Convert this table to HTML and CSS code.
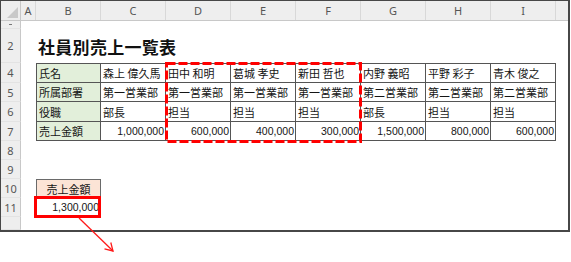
FILE: index.html
```html
<!DOCTYPE html>
<html lang="ja">
<head>
<meta charset="utf-8">
<title>社員別売上一覧表</title>
<link rel="stylesheet" href="styles.css">
</head>
<body>
<div class="page">
  <div class="frame">
    <div class="row hdr">
      <div class="corner"></div>
      <div class="ch">A</div>
      <div class="ch">B</div>
      <div class="ch">C</div>
      <div class="ch">D</div>
      <div class="ch">E</div>
      <div class="ch">F</div>
      <div class="ch">G</div>
      <div class="ch">H</div>
      <div class="ch">I</div>
      <div class="ch last"></div>
    </div>
    <div class="row r1"><div class="rh"><span class="cut"></span></div></div>
    <div class="row r2"><div class="rh">2</div><div></div><div class="title">社員別売上一覧表</div></div>
    <div class="row h20">
      <div class="rh">4</div><div></div>
      <div class="c lbl first top">氏名</div>
      <div class="c top">森上 偉久馬</div>
      <div class="c top">田中 和明</div>
      <div class="c top">葛城 孝史</div>
      <div class="c top">新田 哲也</div>
      <div class="c top">内野 義昭</div>
      <div class="c top">平野 彩子</div>
      <div class="c top">青木 俊之</div>
    </div>
    <div class="row h19">
      <div class="rh">5</div><div></div>
      <div class="c lbl first">所属部署</div>
      <div class="c">第一営業部</div>
      <div class="c">第一営業部</div>
      <div class="c">第一営業部</div>
      <div class="c">第一営業部</div>
      <div class="c">第二営業部</div>
      <div class="c">第二営業部</div>
      <div class="c">第二営業部</div>
    </div>
    <div class="row h20">
      <div class="rh">6</div><div></div>
      <div class="c lbl first">役職</div>
      <div class="c">部長</div>
      <div class="c">担当</div>
      <div class="c">担当</div>
      <div class="c">担当</div>
      <div class="c">部長</div>
      <div class="c">担当</div>
      <div class="c">担当</div>
    </div>
    <div class="row h19">
      <div class="rh">7</div><div></div>
      <div class="c lbl first">売上金額</div>
      <div class="c num">1,000,000</div>
      <div class="c num">600,000</div>
      <div class="c num">400,000</div>
      <div class="c num">300,000</div>
      <div class="c num">1,500,000</div>
      <div class="c num">800,000</div>
      <div class="c num">600,000</div>
    </div>
    <div class="row h19"><div class="rh">8</div></div>
    <div class="row h19"><div class="rh">9</div></div>
    <div class="row h19">
      <div class="rh">10</div><div></div>
      <div class="c hd2">売上金額</div>
    </div>
    <div class="row h19">
      <div class="rh">11</div><div></div>
      <div class="c num tot">1,300,000</div>
    </div>
    <div class="row r12"><div class="rh"></div></div>
  </div>
  <svg class="marks" width="571" height="262" viewBox="0 0 571 262" aria-hidden="true">
    <rect x="166.5" y="63.5" width="194" height="78" fill="none" stroke="#ff0000" stroke-width="3" stroke-dasharray="9 3"/>
    <rect x="35.5" y="197.5" width="64" height="19" fill="none" stroke="#ff0000" stroke-width="3"/>
    <line x1="79" y1="218" x2="113" y2="251" stroke="#ff1a1a" stroke-width="1.3"/>
    <polyline points="104.5,248.8 113,251 110.8,242.5" fill="none" stroke="#ff1a1a" stroke-width="1.3"/>
  </svg>
</div>
</body>
</html>
```
FILE: styles.css
```css
* {
  box-sizing: border-box;
  margin: 0;
  padding: 0;
}

body {
  margin: 0;
  background: #ffffff;
  font-family: "Noto Sans CJK JP", "Noto Sans", sans-serif;
  color: #151515;
}

.page {
  position: relative;
  width: 571px;
  height: 262px;
  overflow: hidden;
}

.frame {
  width: 570px;
  height: 232px;
  border: solid #474747;
  border-width: 1px 2px 2px 1px;
  display: flex;
  flex-direction: column;
  background: #ffffff;
}

.row {
  display: grid;
  grid-template-columns: 20px 15px repeat(8, 65px) 1fr;
  flex: none;
}

.hdr {
  height: 20px;
  background: #eeeeee;
  border-bottom: 1px solid #c8c8c8;
}

.corner {
  position: relative;
  border-right: 1px solid #c8c8c8;
}

.corner::after {
  content: "";
  position: absolute;
  right: 2px;
  bottom: 2px;
  width: 11px;
  height: 11px;
  background: #c9c9c9;
  clip-path: polygon(100% 0, 100% 100%, 0 100%);
}

.ch {
  display: flex;
  align-items: center;
  justify-content: center;
  font-family: "Noto Sans", sans-serif;
  font-size: 11px;
  color: #555555;
  border-right: 1px solid #d8d8d8;
}

.ch.last {
  border-right: none;
}

.rh {
  display: flex;
  align-items: center;
  justify-content: center;
  background: #eeeeee;
  border-right: 1px solid #c8c8c8;
  border-bottom: 1px solid #e3e3e3;
  font-family: "Noto Sans", sans-serif;
  font-size: 11px;
  color: #555555;
  overflow: hidden;
}

.cut {
  display: block;
  width: 3px;
  height: 1px;
  background: #777777;
  margin-bottom: 1px;
}

.r1 { height: 8px; }
.r2 { height: 34px; }
.h20 { height: 20px; }
.h19 { height: 19px; }
.r12 { flex: 1; }

.title {
  grid-column: 3 / -1;
  align-self: center;
  padding-left: 2px;
  font-size: 17px;
  font-weight: 700;
  color: #111111;
  letter-spacing: 0.3px;
}

.c {
  display: flex;
  align-items: center;
  padding: 0 2px;
  font-size: 11px;
  white-space: nowrap;
  overflow: hidden;
  border-right: 1px solid #555555;
  border-bottom: 1px solid #555555;
}

.c.first { border-left: 1px solid #555555; }
.c.top { border-top: 1px solid #555555; }

.lbl { background: #e2efda; }

.num {
  justify-content: flex-end;
  padding: 0 1px 0 2px;
  font-family: "Liberation Sans", sans-serif;
  font-size: 10.5px;
}

.hd2 {
  justify-content: center;
  background: #fce4d6;
  border: 1px solid #6a6a6a;
}

.tot {
  border-left: 1px solid #6a6a6a;
  border-right: 1px solid #6a6a6a;
  border-bottom: 1px solid #6a6a6a;
}

.marks {
  position: absolute;
  left: 0;
  top: 0;
  pointer-events: none;
}
```
